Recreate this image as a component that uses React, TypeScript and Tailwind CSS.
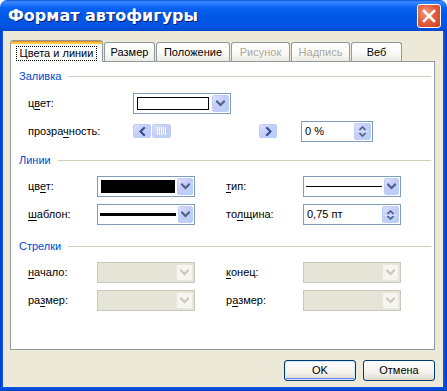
import React from "react";

function Chev({ dir = "down", color = "#4d6185" }: { dir?: "down" | "up" | "left" | "right"; color?: string }) {
  const paths: Record<string, string> = {
    down: "M1 1.5 L4.5 5 L8 1.5",
    up: "M1 5 L4.5 1.5 L8 5",
    left: "M5 1 L1.5 4.5 L5 8",
    right: "M2 1 L5.5 4.5 L2 8",
  };
  const w = dir === "down" || dir === "up" ? 9 : 7;
  const h = dir === "down" || dir === "up" ? 7 : 9;
  return (
    <svg width={w} height={h} viewBox={`0 0 ${w} ${h}`}>
      <path d={paths[dir]} fill="none" stroke={color} strokeWidth="2" strokeLinecap="square" />
    </svg>
  );
}

function DropBtn({ disabled = false }: { disabled?: boolean }) {
  if (disabled) {
    return (
      <div className="w-[17px] h-[17px] rounded-[2px] border border-[#e8e6dd] bg-[#f6f5f0] flex items-center justify-center">
        <Chev color="#c9c7ba" />
      </div>
    );
  }
  return (
    <div className="w-[17px] h-[17px] rounded-[2px] border border-[#bfcdf6] bg-[linear-gradient(135deg,#dde2fe_0%,#c6cbf8_45%,#b3d2f9_100%)] flex items-center justify-center">
      <Chev />
    </div>
  );
}

function Combo({ children, disabled = false, w = "w-[98px]" }: { children?: React.ReactNode; disabled?: boolean; w?: string }) {
  return (
    <div
      className={`${w} h-[21px] border flex items-center pl-[2px] pr-[1px] gap-[2px] ${
        disabled ? "border-[#c9c7ba] bg-[#e5e4d6]" : "border-[#7f9db9] bg-white"
      }`}
    >
      <div className="flex-1 h-full flex items-center">{children}</div>
      <DropBtn disabled={disabled} />
    </div>
  );
}

function Spin({ value, w }: { value: string; w: string }) {
  return (
    <div className={`${w} h-[21px] border border-[#7f9db9] bg-white flex items-center pl-[3px] pr-[1px]`}>
      <div className="flex-1">{value}</div>
      <div className="w-[17px] h-[17px] rounded-[2px] border border-[#bfcdf6] bg-[linear-gradient(135deg,#dde2fe_0%,#c6cbf8_45%,#b3d2f9_100%)] flex flex-col items-center justify-center">
        <div className="h-[8px] flex items-end">
          <svg width="7" height="5" viewBox="0 0 7 5">
            <path d="M0.5 4 L3.5 1 L6.5 4" fill="none" stroke="#4d6185" strokeWidth="1.6" />
          </svg>
        </div>
        <div className="w-[13px] h-px bg-[#dbe2fb]" />
        <div className="h-[7px] flex items-start">
          <svg width="7" height="5" viewBox="0 0 7 5">
            <path d="M0.5 1 L3.5 4 L6.5 1" fill="none" stroke="#4d6185" strokeWidth="1.6" />
          </svg>
        </div>
      </div>
    </div>
  );
}

function ArrowBtn({ dir }: { dir: "left" | "right" }) {
  return (
    <div className="w-[18px] h-[14px] rounded-[2px] border border-[#bfcdf6] bg-[linear-gradient(135deg,#dde2fe_0%,#c6cbf8_45%,#b3d2f9_100%)] flex items-center justify-center">
      <Chev dir={dir} color="#2e4a8a" />
    </div>
  );
}

function Section({ title }: { title: string }) {
  return (
    <div className="flex items-center h-[14px] pl-[8px] pr-[3px]">
      <span className="text-[#0046d5]">{title}</span>
      <div className="flex-1 h-px bg-[#d0d0bf] ml-[7px]" />
    </div>
  );
}

function U({ children }: { children: React.ReactNode }) {
  return <span className="underline underline-offset-[2px]">{children}</span>;
}

export default function App() {
  return (
    <div className="w-[447px] h-[391px] flex flex-col bg-white font-['Liberation_Sans',Arial,sans-serif] text-[11px] text-black leading-none select-none">
      {/* Title bar */}
      <div className="h-[31px] rounded-t-[7px] flex items-center pl-[8px] pr-[6px] bg-[linear-gradient(to_bottom,#0a4fd6_0%,#3d8dff_6%,#2a7cff_12%,#0862f2_25%,#0057e6_55%,#0055e4_80%,#0050da_92%,#0046c8_100%)]">
        <span className="flex-1 text-white font-bold text-[16px] font-['DejaVu_Sans',sans-serif] [text-shadow:1px_1px_0_#0a1e7a] tracking-[0px]">
          Формат автофигуры
        </span>
        <div className="w-[24px] h-[24px] rounded-[3px] border border-white bg-[radial-gradient(circle_at_35%_35%,#f09a7e_0%,#e2603e_45%,#c8401e_100%)] flex items-center justify-center">
          <svg width="14" height="14" viewBox="0 0 14 14">
            <path d="M2 2 L12 12 M12 2 L2 12" stroke="white" strokeWidth="2.6" strokeLinecap="square" />
          </svg>
        </div>
      </div>
      {/* Body */}
      <div className="flex-1 flex flex-row">
        <div className="w-[3px] bg-[linear-gradient(to_right,#0039c8,#0a5ae8)]" />
        <div className="flex-1 bg-[#ece9d8] flex flex-col pt-[9px]">
          {/* Tabs */}
          <div className="h-[21px] flex items-end pl-[7px] relative z-10">
            <div className="w-[93px] h-[22px] -mb-px bg-white border border-b-0 border-[#919b9c] rounded-t-[3px] flex flex-col overflow-hidden">
              <div className="h-[1px] bg-[#e68b2c]" />
              <div className="h-[2px] bg-[#ffc83c]" />
              <div className="flex-1 flex items-center justify-center pt-[1px]">
                <div className="border border-dotted border-black px-[3px] h-[15px] flex items-center">Цвета и линии</div>
              </div>
            </div>
            {[
              ["Размер", "w-[51px]", false],
              ["Положение", "w-[74px]", false],
              ["Рисунок", "w-[59px]", true],
              ["Надпись", "w-[59px]", true],
              ["Веб", "w-[51px]", false],
            ].map(([t, w, dis], i) => (
              <div
                key={i}
                className={`${w} ml-[1px] h-[19px] border border-b-0 border-[#919b9c] rounded-t-[3px] bg-[linear-gradient(to_bottom,#ffffff_0%,#fbfbf9_50%,#ecebe5_100%)] flex items-center justify-center ${
                  dis ? "text-[#aca899]" : "text-black"
                }`}
              >
                {t as string}
              </div>
            ))}
          </div>
          {/* Panel */}
          <div className="ml-[7px] w-[425px] h-[289px] border border-[#919b9c] bg-white flex flex-col pt-[7px]">
            <Section title="Заливка" />
            <div className="mt-[10px] h-[21px] flex items-center pl-[17px]">
              <div className="w-[105px]">
                ц<U>в</U>ет:
              </div>
              <div className="w-[98px] h-[21px] border border-[#7f9db9] bg-white flex items-center pl-[3px] pr-[1px] gap-[3px]">
                <div className="flex-1 h-[13px] border border-black bg-white" />
                <DropBtn />
              </div>
            </div>
            <div className="mt-[7px] h-[20px] flex items-center pl-[17px]">
              <div className="w-[105px]">
                прозра<U>ч</U>ность:
              </div>
              <div className="w-[144px] flex items-center">
                <ArrowBtn dir="left" />
                <div className="ml-[1px] w-[19px] h-[14px] rounded-[2px] border border-[#bfcdf6] bg-[linear-gradient(135deg,#dde2fe_0%,#c6cbf8_45%,#b3d2f9_100%)] flex items-center justify-center gap-[1px]">
                  <div className="w-px h-[8px] bg-white" />
                  <div className="w-px h-[8px] bg-white" />
                  <div className="w-px h-[8px] bg-white" />
                  <div className="w-px h-[8px] bg-white" />
                  <div className="w-px h-[8px] bg-white" />
                </div>
                <div className="flex-1" />
                <ArrowBtn dir="right" />
              </div>
              <div className="ml-[24px]">
                <Spin value="0 %" w="w-[72px]" />
              </div>
            </div>

            <div className="mt-[12px]">
              <Section title="Линии" />
            </div>
            <div className="mt-[9px] h-[21px] flex items-center pl-[17px]">
              <div className="w-[69px]">
                цв<U>е</U>т:
              </div>
              <Combo>
                <div className="w-[74px] h-[13px] bg-black ml-px" />
              </Combo>
              <div className="w-[31px]" />
              <div className="w-[77px]">
                <U>т</U>ип:
              </div>
              <Combo>
                <div className="w-[76px] h-px bg-black" />
              </Combo>
            </div>
            <div className="mt-[7px] h-[21px] flex items-center pl-[17px]">
              <div className="w-[69px]">
                <U>ш</U>аблон:
              </div>
              <Combo>
                <div className="w-[76px] h-[3px] bg-black" />
              </Combo>
              <div className="w-[31px]" />
              <div className="w-[77px]">
                то<U>л</U>щина:
              </div>
              <Spin value="0,75 пт" w="w-[98px]" />
            </div>

            <div className="mt-[14px]">
              <Section title="Стрелки" />
            </div>
            <div className="mt-[9px] h-[21px] flex items-center pl-[17px]">
              <div className="w-[69px]">
                <U>н</U>ачало:
              </div>
              <Combo disabled />
              <div className="w-[31px]" />
              <div className="w-[77px]">
                <U>к</U>онец:
              </div>
              <Combo disabled />
            </div>
            <div className="mt-[7px] h-[21px] flex items-center pl-[17px]">
              <div className="w-[69px]">
                ра<U>з</U>мер:
              </div>
              <Combo disabled />
              <div className="w-[31px]" />
              <div className="w-[77px]">
                р<U>а</U>змер:
              </div>
              <Combo disabled />
            </div>
          </div>
          {/* Buttons */}
          <div className="mt-[10px] flex justify-end gap-[7px] pr-[8px]">
            <div className="w-[72px] h-[21px] rounded-[3px] border border-[#003c74] bg-[linear-gradient(to_bottom,#ffffff_0%,#f4f3ee_60%,#dcd8cc_100%)] shadow-[inset_0_0_0_1px_#cee7ff,inset_0_-1px_0_1px_#6982ee] flex items-center justify-center">
              OK
            </div>
            <div className="w-[72px] h-[21px] rounded-[3px] border border-[#003c74] bg-[linear-gradient(to_bottom,#ffffff_0%,#f4f3ee_60%,#dcd8cc_100%)] flex items-center justify-center">
              Отмена
            </div>
          </div>
        </div>
        <div className="w-[4px] bg-[linear-gradient(to_right,#0a5ae8,#0039c8)]" />
      </div>
      <div className="h-[4px] bg-[linear-gradient(to_bottom,#0a5ae8,#0039c8)]" />
    </div>
  );
}
